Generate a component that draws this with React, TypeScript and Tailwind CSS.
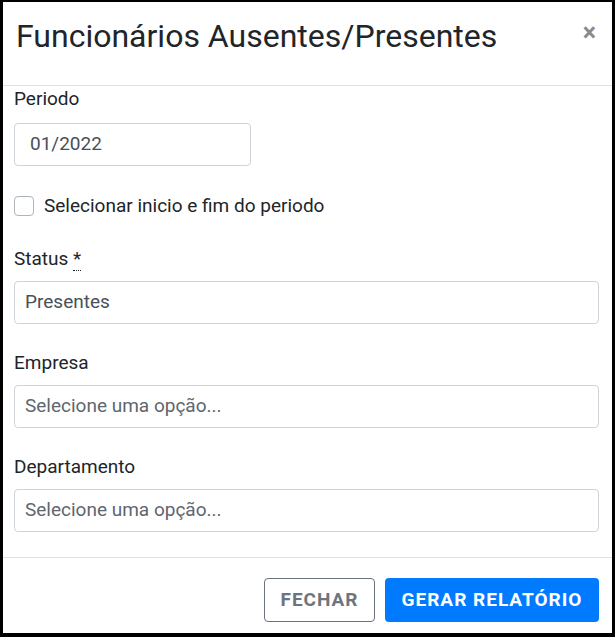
import React from 'react';

const Field = ({ label, value, required, placeholder }: { label: string; value?: string; required?: boolean; placeholder?: boolean }) => (
  <div className="flex flex-col">
    <label className="text-[19px] leading-[28px] text-[#212529]">
      {label}
      {required && (
        <> <abbr className="no-underline border-b border-dotted border-[#212529]" title="obrigatório">*</abbr></>
      )}
    </label>
    <div className="mt-[8px] h-[43px] flex items-center px-[10px] border border-[#ced4da] rounded-[4px] bg-white">
      <span className={`text-[19px] ${placeholder ? 'text-[#5f666d]' : 'text-[#495057]'}`}>{value}</span>
    </div>
  </div>
);

export default function App() {
  return (
    <div
      className="w-[615px] h-[637px] bg-white border-black border-t-[2px] border-l-[3px] border-r-[3px] border-b-[4px] flex flex-col"
      style={{ fontFamily: 'Roboto, "Liberation Sans", sans-serif' }}
    >
      {/* header */}
      <div className="h-[84px] shrink-0 flex items-start justify-between pl-[13px] pr-[16px] border-b border-[#dee2e6]">
        <h1 className="mt-[14px] text-[32px] leading-[40px] text-[#212529]">Funcionários Ausentes/Presentes</h1>
        <button className="mt-[18px] text-[25px] font-bold leading-none text-[#8a8a8a]">×</button>
      </div>

      {/* body */}
      <div className="flex-1 pl-[11px] pr-[13px] pt-[1px]">
        <label className="block text-[19px] leading-[24px] text-[#212529]">Periodo</label>
        <div className="mt-[12px] w-[237px] h-[43px] flex items-center px-[15px] border border-[#ced4da] rounded-[4px]">
          <span className="text-[19px] text-[#495057]">01/2022</span>
        </div>

        <label className="mt-[28px] h-[24px] flex items-center gap-[10px]">
          <span className="w-[20px] h-[20px] border border-[#adb5bd] rounded-[4px] bg-white" />
          <span className="text-[19px] leading-[24px] text-[#212529]">Selecionar inicio e fim do periodo</span>
        </label>

        <div className="mt-[27px] flex flex-col gap-[25px]">
          <Field label="Status" required value="Presentes" />
          <Field label="Empresa" value="Selecione uma opção..." placeholder />
          <Field label="Departamento" value="Selecione uma opção..." placeholder />
        </div>
      </div>

      {/* footer */}
      <div className="h-[76px] shrink-0 border-t border-[#dee2e6] flex items-start justify-end gap-[10px] pt-[20px] pr-[13px]">
        <button className="h-[44px] w-[111px] border border-[#6c757d] rounded-[4px] text-[19px] font-bold tracking-[1px] text-[#6c757d]">
          FECHAR
        </button>
        <button className="h-[44px] w-[214px] bg-[#007bff] rounded-[4px] text-[19px] font-bold tracking-[1px] text-white">
          GERAR RELATÓRIO
        </button>
      </div>
    </div>
  );
}
